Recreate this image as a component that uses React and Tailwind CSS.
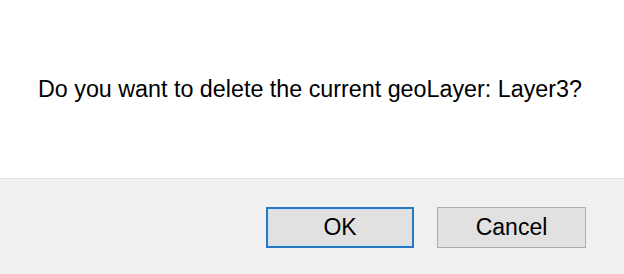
import React from "react";

const App = () => {
  return (
    <div
      className="w-[624px] h-[274px] flex flex-col bg-white"
      style={{ fontFamily: '"Liberation Sans", Arial, sans-serif' }}
    >
      <div className="h-[178px] pl-[38px] pt-[76px] text-[23.3px] leading-[26px] text-black">
        Do you want to delete the current geoLayer: Layer3?
      </div>
      <div className="flex-1 bg-[#f0f0f0] border-t border-[#e3e3e3] flex justify-end items-start pt-[28px] pr-[38px] gap-[23px]">
        <button className="w-[148px] h-[41px] bg-[#e1e1e1] border-2 border-[#2b78c2] outline outline-1 outline-[#cce4f7] -outline-offset-3 text-[23px] text-black">
          OK
        </button>
        <button className="w-[149px] h-[41px] bg-[#e1e1e1] border border-[#adadad] text-[23px] text-black">
          Cancel
        </button>
      </div>
    </div>
  );
};

export default App;
